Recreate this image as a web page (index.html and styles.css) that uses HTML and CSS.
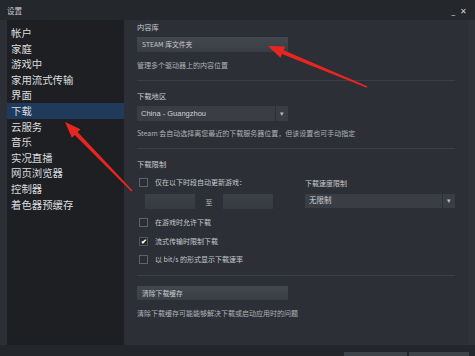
FILE: index.html
```html
<!DOCTYPE html>
<html lang="zh-CN">
  <head>
    <meta charset="UTF-8" />
    <meta name="viewport" content="width=device-width, initial-scale=1.0" />
    <title>设置</title>
    <link rel="stylesheet" href="styles.css">
  </head>
  <body>
    <div class="window">
      <div class="titlebar">
        <span class="title">设置</span>
        <span class="controls"><span>_</span><span>✕</span></span>
      </div>

      <div class="main">
        <ul class="sidebar">
          <li>帐户</li>
          <li>家庭</li>
          <li>游戏中</li>
          <li>家用流式传输</li>
          <li>界面</li>
          <li class="active">下载</li>
          <li>云服务</li>
          <li>音乐</li>
          <li>实况直播</li>
          <li>网页浏览器</li>
          <li>控制器</li>
          <li>着色器预缓存</li>
        </ul>

        <div class="panel">
          <div class="label first">内容库</div>
          <div class="button">STEAM 库文件夹</div>
          <div class="desc">管理多个驱动器上的内容位置</div>
          <div class="divider"></div>

          <div class="label">下载地区</div>
          <div class="select region">
            <span class="value">China - Guangzhou</span>
            <span class="arrow">▾</span>
          </div>
          <div class="desc">Steam 会自动选择离您最近的下载服务器位置，但该设置也可手动指定</div>
          <div class="divider"></div>

          <div class="label">下载限制</div>
          <div class="limits">
            <div class="limit-left">
              <div class="check"><span class="box"></span>仅在以下时段自动更新游戏：</div>
              <div class="times">
                <span class="time"></span>
                <span class="to">至</span>
                <span class="time"></span>
              </div>
            </div>
            <div class="limit-right">
              <div class="small-label">下载速度限制</div>
              <div class="select speed">
                <span class="value">无限制</span>
                <span class="arrow">▾</span>
              </div>
            </div>
          </div>
          <div class="check spaced"><span class="box"></span>在游戏时允许下载</div>
          <div class="check spaced2"><span class="box checked">✔</span>流式传输时限制下载</div>
          <div class="check spaced"><span class="box"></span>以 bit/s 的形式显示下载速率</div>
          <div class="divider low"></div>

          <div class="button clear">清除下载缓存</div>
          <div class="desc">清除下载缓存可能能够解决下载或启动应用时的问题</div>
        </div>
        <div class="scroll"></div>
      </div>

      <div class="footer">
        <span class="foot-btn"></span>
        <span class="foot-btn"></span>
      </div>

      <svg class="marks" width="475" height="356" viewBox="0 0 475 356">
        <polygon points="268,46 285.1,46.6 283.6,50.3 367.3,86.3 366.7,87.7 282,54 280.5,57.7" />
        <polygon points="65,122 80.5,129.3 77.6,132.1 132.6,190.4 131.4,191.6 74.8,134.9 71.9,137.7" />
      </svg>
    </div>
  </body>
</html>
```

FILE: styles.css
```css
body {
  margin: 0;
  padding: 0;
  background-color: #2c2f35;
  font-family: "Noto Sans", "Noto Sans CJK SC", sans-serif;
  color: #c8cbd0;
  overflow: hidden;
}

.window {
  position: relative;
  width: 475px;
  height: 356px;
  background-color: #2c2f35;
  overflow: hidden;
}

.titlebar {
  height: 20px;
  background-color: #24272c;
  display: flex;
  align-items: center;
  justify-content: space-between;
  padding: 0 8px 0 7px;
  font-size: 7.5px;
  color: #c9ccd0;
}

.controls {
  display: flex;
  gap: 5px;
  font-size: 8px;
  color: #d0d3d6;
}

.main {
  display: flex;
  height: 325px;
  padding-left: 7px;
}

.sidebar {
  list-style: none;
  margin: 0;
  padding: 5px 0 0 0;
  width: 117px;
  background-color: #1d1f23;
  font-family: "Noto Sans CJK SC", sans-serif;
  font-size: 10.4px;
}

.sidebar li {
  height: 15.6px;
  line-height: 15.6px;
  padding-left: 4px;
  color: #d9dcdf;
}

.sidebar li.active {
  background-color: #1f3a5a;
}

.panel {
  flex: 1;
  padding: 2px 0 0 13px;
  font-family: "Noto Sans CJK SC", sans-serif;
}

.label {
  height: 10px;
  line-height: 10px;
  font-size: 7.3px;
  color: #c7cacf;
  margin-top: 10px;
}

.label.first {
  margin-top: 0;
}

.button {
  width: 146px;
  height: 15px;
  line-height: 15px;
  margin-top: 5px;
  padding-left: 5px;
  font-size: 6.8px;
  color: #c5c9ce;
  background: linear-gradient(#43474f, #393d44);
}

.button.clear {
  margin-top: 10px;
  height: 14px;
  line-height: 14px;
}

.desc {
  height: 10px;
  line-height: 10px;
  margin-top: 8px;
  font-size: 7px;
  color: #aeb2b8;
  white-space: nowrap;
}

.divider {
  height: 1px;
  margin-top: 10px;
  width: 318px;
  background-color: #3b3f46;
}

.divider.low {
  margin-top: 11px;
}

.select {
  display: flex;
  height: 15px;
  background-color: #3a3d44;
  font-family: "Liberation Sans", "Noto Sans CJK SC", sans-serif;
}

.select .value {
  flex: 1;
  line-height: 15px;
  padding-left: 4px;
  font-size: 7.5px;
  color: #cfd2d6;
}

.select .arrow {
  width: 12px;
  border-left: 1px solid #2c2f35;
  text-align: center;
  line-height: 15px;
  font-size: 7px;
  color: #b9bdc2;
}

.region {
  width: 151px;
  margin-top: 5px;
}

.region + .desc {
  margin-top: 7px;
}

.limits {
  display: flex;
  margin-top: 8px;
}

.limit-left {
  width: 168px;
}

.limit-right {
  width: 150px;
}

.small-label {
  height: 10px;
  line-height: 10px;
  margin-top: 1px;
  font-size: 7px;
  color: #c7cacf;
}

.speed {
  margin-top: 6px;
  height: 14px;
}

.speed .value,
.speed .arrow {
  line-height: 14px;
}

.check {
  display: flex;
  align-items: center;
  height: 10px;
  padding-left: 2px;
  font-size: 7px;
  color: #c3c7cc;
}

.check.spaced {
  margin-top: 8px;
}

.check.spaced2 {
  margin-top: 9px;
}

.box {
  width: 7px;
  height: 7px;
  border: 1px solid #5d6168;
  background-color: #2a2d32;
  margin-right: 7px;
  font-size: 7px;
  line-height: 7px;
  text-align: center;
  color: #ffffff;
}

.box.checked {
  border-color: #50545b;
  background-color: #25282d;
  font-weight: bold;
}

.times {
  display: flex;
  align-items: center;
  margin-top: 7px;
  padding-left: 8px;
}

.time {
  width: 50px;
  height: 15px;
  background: linear-gradient(#3c4047, #373a41);
}

.to {
  width: 28px;
  text-align: center;
  font-size: 7px;
  color: #b8bcc1;
}

.scroll {
  width: 7px;
  background-color: #2f3238;
}

.footer {
  height: 11px;
  background-color: #23262b;
  display: flex;
  justify-content: flex-end;
  gap: 2px;
  padding-right: 6px;
}

.foot-btn {
  width: 63px;
  height: 4px;
  margin-top: 7px;
  background-color: #3e4249;
}

.foot-btn + .foot-btn {
  width: 60px;
}

.marks {
  position: absolute;
  left: 0;
  top: 0;
  pointer-events: none;
}

.marks polygon {
  fill: #e8261f;
}
```
